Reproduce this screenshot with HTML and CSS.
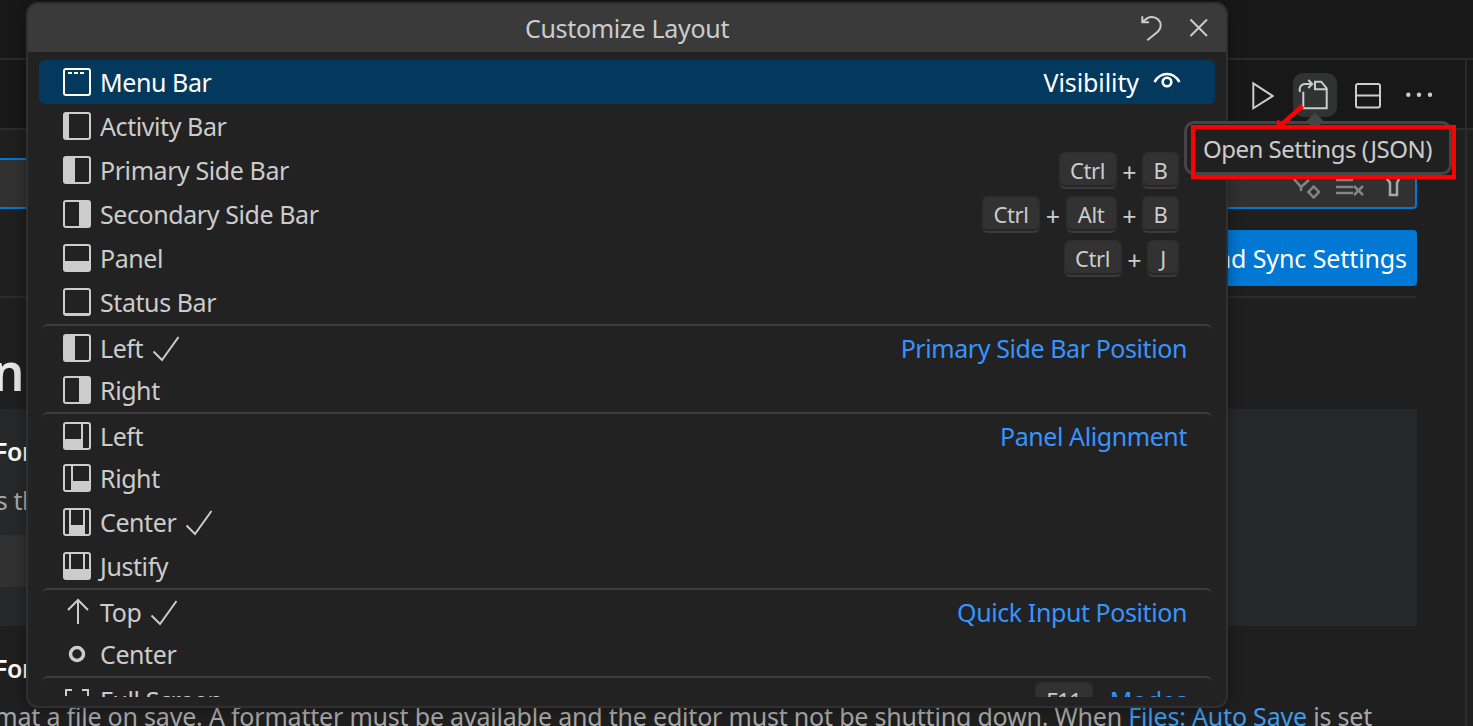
FILE: index.html
```html
<!DOCTYPE html>
<html lang="en">
<head>
<meta charset="utf-8">
<title>Customize Layout</title>
<link rel="stylesheet" href="styles.css">
</head>
<body>
<svg class="defs" width="0" height="0" aria-hidden="true">
  <symbol id="frame" viewBox="0 0 28 28"><rect x="1" y="1" width="26" height="26" rx="2" fill="none" stroke="currentColor" stroke-width="2"/></symbol>
</svg>
<div class="workbench">
  <header class="titlebar"></header>
  <div class="tabs">
    <div class="action">
      <svg width="44" height="44" viewBox="0 0 44 44"><path d="M12.3 10.3 31.7 23 12.3 35.3Z" class="ln"/></svg>
    </div>
    <div class="action hover">
      <svg width="44" height="44" viewBox="0 0 44 44"><path d="M10.3 18.7V35.3H33.7V15.3L28.2 8.7H22V16.3H33.7" class="ln"/><path d="M7 19C5.500 15 8 11 12 11H19M15.300 7 19.300 11 15.300 15" class="ln"/></svg>
    </div>
    <div class="action">
      <svg width="44" height="44" viewBox="0 0 44 44"><rect x="11" y="11" width="24" height="23.500" rx="2" class="ln"/><path d="M11 22.500H35" class="ln"/></svg>
    </div>
    <div class="action">
      <svg width="44" height="44" viewBox="0 0 44 44"><circle cx="11.300" cy="21.700" r="2.200" fill="#ccc"/><circle cx="22" cy="21.700" r="2.200" fill="#ccc"/><circle cx="33" cy="21.700" r="2.200" fill="#ccc"/></svg>
    </div>
  </div>
  <main class="editor">
    <div class="search">
      <svg width="28" height="28" viewBox="0 0 28 28"><path d="M2 8 9 16V20M9 16 17 9" class="dim"/><path d="M21.700 15.500 27 21 21.700 26.500 16.500 21Z" class="dim"/></svg>
      <svg width="28" height="28" viewBox="0 0 28 28"><path d="M0 9H17M0 16H17M0 22H17M18 15 27 24M27 15 18 24" class="dim"/></svg>
      <svg width="28" height="28" viewBox="0 0 28 28"><path d="M3 2 10 12V24H17V12L22 2" class="dim bright"/></svg>
    </div>
    <div class="sync"><button class="sync-btn">Backup and Sync Settings</button></div>
    <hr class="rule">
    <h2 class="heading">Commonly Used</h2>
    <section class="setting focused">
      <div class="setting-title">Editor: <b>Font Size</b></div>
      <div class="setting-desc">Controls the font size in pixels.</div>
      <div class="setting-input"></div>
    </section>
    <section class="setting">
      <div class="setting-title">Editor: <b>Format On Save</b></div>
      <div class="setting-long"><span>Format a file on save. A formatter must be available and the editor must not be shutting down. When <a class="link">Files: Auto Save</a> is set</span></div>
    </section>
  </main>
  <div class="scroll-line"></div>
</div>

<div class="modal">
  <div class="modal-title">
    <span></span>
    <span class="modal-name">Customize Layout</span>
    <div class="modal-actions">
      <svg width="28" height="28" viewBox="0 0 28 28"><path d="M4.300 2.300V8.300H11M4.800 8C8 4.500 11 3 13.700 3 19 3 22.700 7 22.700 11.500 22.700 14 21.500 16 20 17.500L9.300 26.300" class="ln"/></svg>
      <svg width="28" height="28" viewBox="0 0 28 28"><path d="M5.500 5.500 22 22M22 5.500 5.500 22" class="ln"/></svg>
    </div>
  </div>
  <div class="list">
    <div class="row selected">
      <svg class="ico" viewBox="0 0 28 28"><use href="#frame"/><path d="M5 5H21" stroke="currentColor" stroke-width="2" stroke-dasharray="4 2"/></svg>
      <span class="label">Menu Bar</span><span class="grow"></span>
      <span class="group white">Visibility</span>
      <svg class="eye" viewBox="0 0 28 28"><path d="M1.500 14C5 8 9 6 14 6S23 8 26.500 14" fill="none" stroke="currentColor" stroke-width="2.500"/><circle cx="14" cy="14" r="4.300" fill="none" stroke="currentColor" stroke-width="2.600"/></svg>
    </div>
    <div class="row">
      <svg class="ico" viewBox="0 0 28 28"><use href="#frame"/><rect x="1" y="1" width="5" height="26" fill="currentColor"/></svg>
      <span class="label">Activity Bar</span>
    </div>
    <div class="row">
      <svg class="ico" viewBox="0 0 28 28"><use href="#frame"/><rect x="1" y="1" width="11" height="26" fill="currentColor"/></svg>
      <span class="label">Primary Side Bar</span><span class="grow"></span>
      <span class="keys"><kbd class="k-ctrl">Ctrl</kbd><i>+</i><kbd class="k-b">B</kbd></span>
    </div>
    <div class="row">
      <svg class="ico" viewBox="0 0 28 28"><use href="#frame"/><rect x="16" y="1" width="11" height="26" fill="currentColor"/></svg>
      <span class="label">Secondary Side Bar</span><span class="grow"></span>
      <span class="keys"><kbd class="k-ctrl">Ctrl</kbd><i>+</i><kbd class="k-alt">Alt</kbd><i>+</i><kbd class="k-b">B</kbd></span>
    </div>
    <div class="row">
      <svg class="ico" viewBox="0 0 28 28"><use href="#frame"/><rect x="1" y="17" width="26" height="10" fill="currentColor"/></svg>
      <span class="label">Panel</span><span class="grow"></span>
      <span class="keys"><kbd class="k-ctrl">Ctrl</kbd><i>+</i><kbd class="k-j">J</kbd></span>
    </div>
    <div class="row">
      <svg class="ico" viewBox="0 0 28 28"><use href="#frame"/><rect x="1" y="25" width="26" height="2" fill="currentColor"/></svg>
      <span class="label">Status Bar</span>
    </div>

    <div class="row sep">
      <svg class="ico" viewBox="0 0 28 28"><use href="#frame"/><rect x="1" y="1" width="11" height="26" fill="currentColor"/></svg>
      <span class="label">Left</span>
      <svg class="check" viewBox="0 0 28 28"><path d="M1.500 17.500 10 26 26.500 3" fill="none" stroke="currentColor" stroke-width="2"/></svg>
      <span class="grow"></span><span class="group">Primary Side Bar Position</span>
    </div>
    <div class="row">
      <svg class="ico" viewBox="0 0 28 28"><use href="#frame"/><rect x="16" y="1" width="11" height="26" fill="currentColor"/></svg>
      <span class="label">Right</span>
    </div>

    <div class="row sep">
      <svg class="ico" viewBox="0 0 28 28"><use href="#frame"/><rect x="1" y="17" width="18" height="10" fill="currentColor"/><path d="M19 1V27" stroke="currentColor" stroke-width="2"/></svg>
      <span class="label">Left</span>
      <span class="grow"></span><span class="group">Panel Alignment</span>
    </div>
    <div class="row">
      <svg class="ico" viewBox="0 0 28 28"><use href="#frame"/><rect x="9" y="17" width="18" height="10" fill="currentColor"/><path d="M9 1V27" stroke="currentColor" stroke-width="2"/></svg>
      <span class="label">Right</span>
    </div>
    <div class="row">
      <svg class="ico" viewBox="0 0 28 28"><use href="#frame"/><rect x="8" y="17" width="12" height="10" fill="currentColor"/><path d="M7 1V27M21 1V27" stroke="currentColor" stroke-width="2"/></svg>
      <span class="label">Center</span>
      <svg class="check" viewBox="0 0 28 28"><path d="M1.500 17.500 10 26 26.500 3" fill="none" stroke="currentColor" stroke-width="2"/></svg>
    </div>
    <div class="row">
      <svg class="ico" viewBox="0 0 28 28"><use href="#frame"/><rect x="1" y="17" width="26" height="10" fill="currentColor"/><path d="M7 1V17M21 1V17" stroke="currentColor" stroke-width="2"/></svg>
      <span class="label">Justify</span>
    </div>

    <div class="row sep">
      <svg class="ico" viewBox="0 0 28 28"><path d="M15 26V2M5 12 15 2 25 12" fill="none" stroke="currentColor" stroke-width="2"/></svg>
      <span class="label">Top</span>
      <svg class="check" viewBox="0 0 28 28"><path d="M1.500 17.500 10 26 26.500 3" fill="none" stroke="currentColor" stroke-width="2"/></svg>
      <span class="grow"></span><span class="group">Quick Input Position</span>
    </div>
    <div class="row">
      <svg class="ico" viewBox="0 0 28 28"><circle cx="14" cy="14" r="6.500" fill="none" stroke="currentColor" stroke-width="3.500"/></svg>
      <span class="label">Center</span>
    </div>

    <div class="row sep">
      <svg class="ico" viewBox="0 0 28 28"><path d="M3 10V4H9M19 4H25V10M25 18V24H19M9 24H3V18" fill="none" stroke="currentColor" stroke-width="2"/></svg>
      <span class="label">Full Screen</span>
      <span class="grow"></span>
      <span class="keys keys-modes"><kbd class="k-ctrl">F11</kbd></span>
      <span class="group">Modes</span>
    </div>
  </div>
</div>

<div class="tooltip">
  <span class="tooltip-arrow"></span>
  Open Settings (JSON)
</div>
<div class="annotation"></div>
<svg class="annotation-arrow" width="40" height="36" viewBox="0 0 40 36"><path d="M32.500 6 10 26" stroke="#f00" stroke-width="4.500" fill="none"/><path d="M6 29 8 20 15 28Z" fill="#f00" stroke="#f00"/></svg>
</body>
</html>
```
FILE: styles.css
```css
* { box-sizing: border-box; }
html, body { margin: 0; height: 100%; overflow: hidden; background: #1f1f1f; }
body { font-family: "Noto Sans", "Liberation Sans", sans-serif; font-size: 25px; letter-spacing: -0.42px; color: #ccc; }
.defs { display: block; position: absolute; }

.workbench { width: 1473px; height: 726px; display: flex; flex-direction: column; overflow: hidden; position: relative; }
.titlebar { height: 60px; flex: none; background: #181818; border-bottom: 2px solid #2b2b2b; }
.tabs { height: 70px; flex: none; background: #181818; border-bottom: 2px solid #2b2b2b; padding: 13px 32px 0 0; display: flex; justify-content: flex-end; gap: 8px; }
.action { width: 44px; height: 44px; border-radius: 10px; }
.action.hover { background: #313232; }
.ln { fill: none; stroke: #ccc; stroke-width: 2; }
.dim { fill: none; stroke: #858585; stroke-width: 2.500; }
.bright { stroke: #a8a8a8; }

.editor { flex: 1; min-height: 0; padding: 28px 56px 0 0; }
.search { height: 51px; background: #313131; border: 2px solid #0078d4; border-left: 0; border-radius: 0 4px 4px 0; display: flex; justify-content: flex-end; align-items: center; gap: 16px; padding: 3px 7px 0 0; }
.sync { margin-top: 21px; display: flex; justify-content: flex-end; }
.sync-btn { height: 56px; padding: 0 10px 0 14px; background: #0078d4; color: #fff; border: 0; border-radius: 4px; font: inherit; letter-spacing: -0.1px; }
.rule { height: 2px; margin: 10px 0 0; border: 0; background: #2b2b2b; }
.heading { height: 111px; margin: 0 0 0 -195px; padding-top: 40px; font-size: 50px; line-height: 68px; font-weight: 600; color: #e7e7e7; white-space: nowrap; }
.setting { padding-top: 22px; }
.setting.focused { height: 217px; background: #27282a; }
.setting-title { margin-left: -86px; color: #ddd; line-height: 40px; white-space: nowrap; }
.setting-title b { color: #fff; font-weight: 600; }
.setting-desc { margin: 9px 0 0 -88px; line-height: 40px; color: #a8a8a8; white-space: nowrap; }
.setting-input { width: 600px; height: 52px; margin-top: 15px; background: #313131; }
.setting + .setting { padding-top: 22px; }
.setting-long { display: flex; justify-content: flex-end; margin: 8px -56px 0 0; padding-right: 101px; line-height: 40px; color: #a8a8a8; white-space: nowrap; letter-spacing: -0.2px; }
.link { color: #3f9be8; }
.scroll-line { position: absolute; left: 1465px; top: 60px; bottom: 0; width: 2px; background: #2b2b2b; }

.modal { position: absolute; left: 26px; top: 2px; width: 1202px; height: 706px; background: #222; border: 2px solid #303030; border-radius: 12px; box-shadow: 0 0 16px rgba(0,0,0,.36); overflow: hidden; }
.modal-title { height: 48px; background: #3a3a3a; display: grid; grid-template-columns: 1fr auto 1fr; align-items: center; padding: 0 13px; }
.modal-name { text-align: center; line-height: 48px; letter-spacing: -0.3px; }
.modal-actions { display: flex; justify-content: flex-end; gap: 19px; }
.list { height: 645px; padding: 8px 11px 0; overflow: hidden; }

.row { height: 44px; display: flex; align-items: center; padding: 0 28px 0 24px; border-radius: 6px; white-space: nowrap; }
.row.selected { background: #04395e; color: #fff; }
.row.sep { margin: 0 3px; padding: 2px 25px 0 21px; border-top: 2px solid #3c3c3c; }
.ico { width: 28px; height: 28px; flex: none; margin-right: 9px; }
.label { flex: none; }
.grow { flex: 1; }
.check { width: 28px; height: 28px; flex: none; margin-left: 9px; }
.group { color: #3794ff; }
.group.white { color: #fff; letter-spacing: -0.1px; }
.eye { width: 28px; height: 28px; flex: none; margin-left: 14px; margin-right: 6px; }
.keys { display: flex; align-items: center; margin-right: 8px; }
.keys-modes { margin-right: 17px; }
.keys i { width: 25.500px; text-align: center; font-style: normal; margin-top: 3px; }
kbd { display: block; height: 37px; line-height: 33px; font-family: inherit; font-size: 22px; text-align: center; color: #ccc; background: #323232; border: 2px solid #2e2e2e; border-bottom-color: #3a3a3a; border-radius: 6px; box-shadow: inset 0 -2px 0 #262626; }
.k-ctrl { width: 58px; }
.k-alt { width: 51px; }
.k-b { width: 37px; }
.k-j { width: 32px; }

.tooltip { position: absolute; left: 1184px; top: 121px; width: 268px; height: 54px; background: #202020; border: 3px solid #454545; border-radius: 10px; line-height: 50px; padding-left: 16px; white-space: nowrap; color: #ccc; font-size: 24px; letter-spacing: -0.5px; }
.tooltip-arrow { position: absolute; left: 122px; top: -9px; width: 12px; height: 12px; background: #454545; transform: rotate(45deg); }
.annotation { position: absolute; left: 1191px; top: 125px; width: 265px; height: 54px; border: 4px solid #f00; }
.annotation-arrow { position: absolute; left: 1270px; top: 100px; }
```
